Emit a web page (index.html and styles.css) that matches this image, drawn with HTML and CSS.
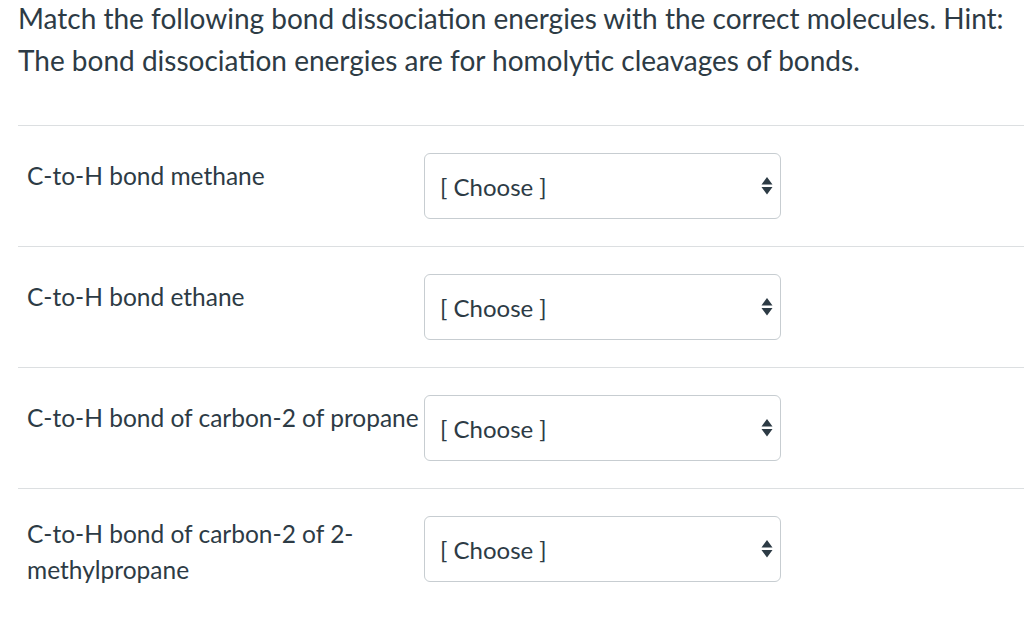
FILE: index.html
```html
<!DOCTYPE html>
<html>
<head>
<meta charset="utf-8">
<link rel="stylesheet" href="styles.css">
</head>
<body>
<div class="question">
  <p class="prompt">Match the following bond dissociation energies with the correct molecules. Hint: The bond dissociation energies are for homolytic cleavages of bonds.</p>
  <div class="answers">
    <div class="row">
      <div class="label">C-to-H bond methane</div>
      <div class="select"><span class="value">[ Choose ]</span><svg class="arrows" width="12" height="20" viewBox="0 0 12 20"><path d="M6 1 L11.5 8.5 L0.5 8.5 Z M0.5 11 L11.5 11 L6 18.5 Z" fill="#2d3b45"/></svg></div>
    </div>
    <div class="row">
      <div class="label">C-to-H bond ethane</div>
      <div class="select"><span class="value">[ Choose ]</span><svg class="arrows" width="12" height="20" viewBox="0 0 12 20"><path d="M6 1 L11.5 8.5 L0.5 8.5 Z M0.5 11 L11.5 11 L6 18.5 Z" fill="#2d3b45"/></svg></div>
    </div>
    <div class="row">
      <div class="label">C-to-H bond of carbon-2 of propane</div>
      <div class="select"><span class="value">[ Choose ]</span><svg class="arrows" width="12" height="20" viewBox="0 0 12 20"><path d="M6 1 L11.5 8.5 L0.5 8.5 Z M0.5 11 L11.5 11 L6 18.5 Z" fill="#2d3b45"/></svg></div>
    </div>
    <div class="row">
      <div class="label label-tall">C-to-H bond of carbon-2 of 2-methylpropane</div>
      <div class="select"><span class="value">[ Choose ]</span><svg class="arrows" width="12" height="20" viewBox="0 0 12 20"><path d="M6 1 L11.5 8.5 L0.5 8.5 Z M0.5 11 L11.5 11 L6 18.5 Z" fill="#2d3b45"/></svg></div>
    </div>
  </div>
</div>
</body>
</html>
```

FILE: styles.css
```css
html, body {
  margin: 0;
  padding: 0;
  background: #ffffff;
}
body {
  font-family: Lato, "Open Sans", sans-serif;
  color: #2d3b45;
  width: 1024px;
  height: 627px;
  overflow: hidden;
}
.question {
  padding-left: 18px;
}
.prompt {
  margin: -3px 0 0 0;
  font-size: 28px;
  line-height: 42px;
  padding-bottom: 44px;
}
.answers {
  display: flex;
  flex-direction: column;
}
.row {
  display: flex;
  align-items: flex-start;
  border-top: 1px solid #dcdfe1;
  padding: 27px 0 27px 0;
}
.label {
  width: 397px;
  padding-left: 9px;
  padding-top: 5px;
  font-size: 24.5px;
  line-height: 36px;
}
.label-tall {
  padding-top: 0;
  margin-top: 0;
}
.select {
  box-sizing: border-box;
  width: 357px;
  height: 66px;
  border: 1px solid #c7cdd1;
  border-radius: 6px;
  display: flex;
  align-items: center;
  justify-content: space-between;
  padding: 0 7px 0 15px;
  font-size: 24px;
}
.value {
  padding-top: 0;
}
.arrows {
  display: block;
}
```
